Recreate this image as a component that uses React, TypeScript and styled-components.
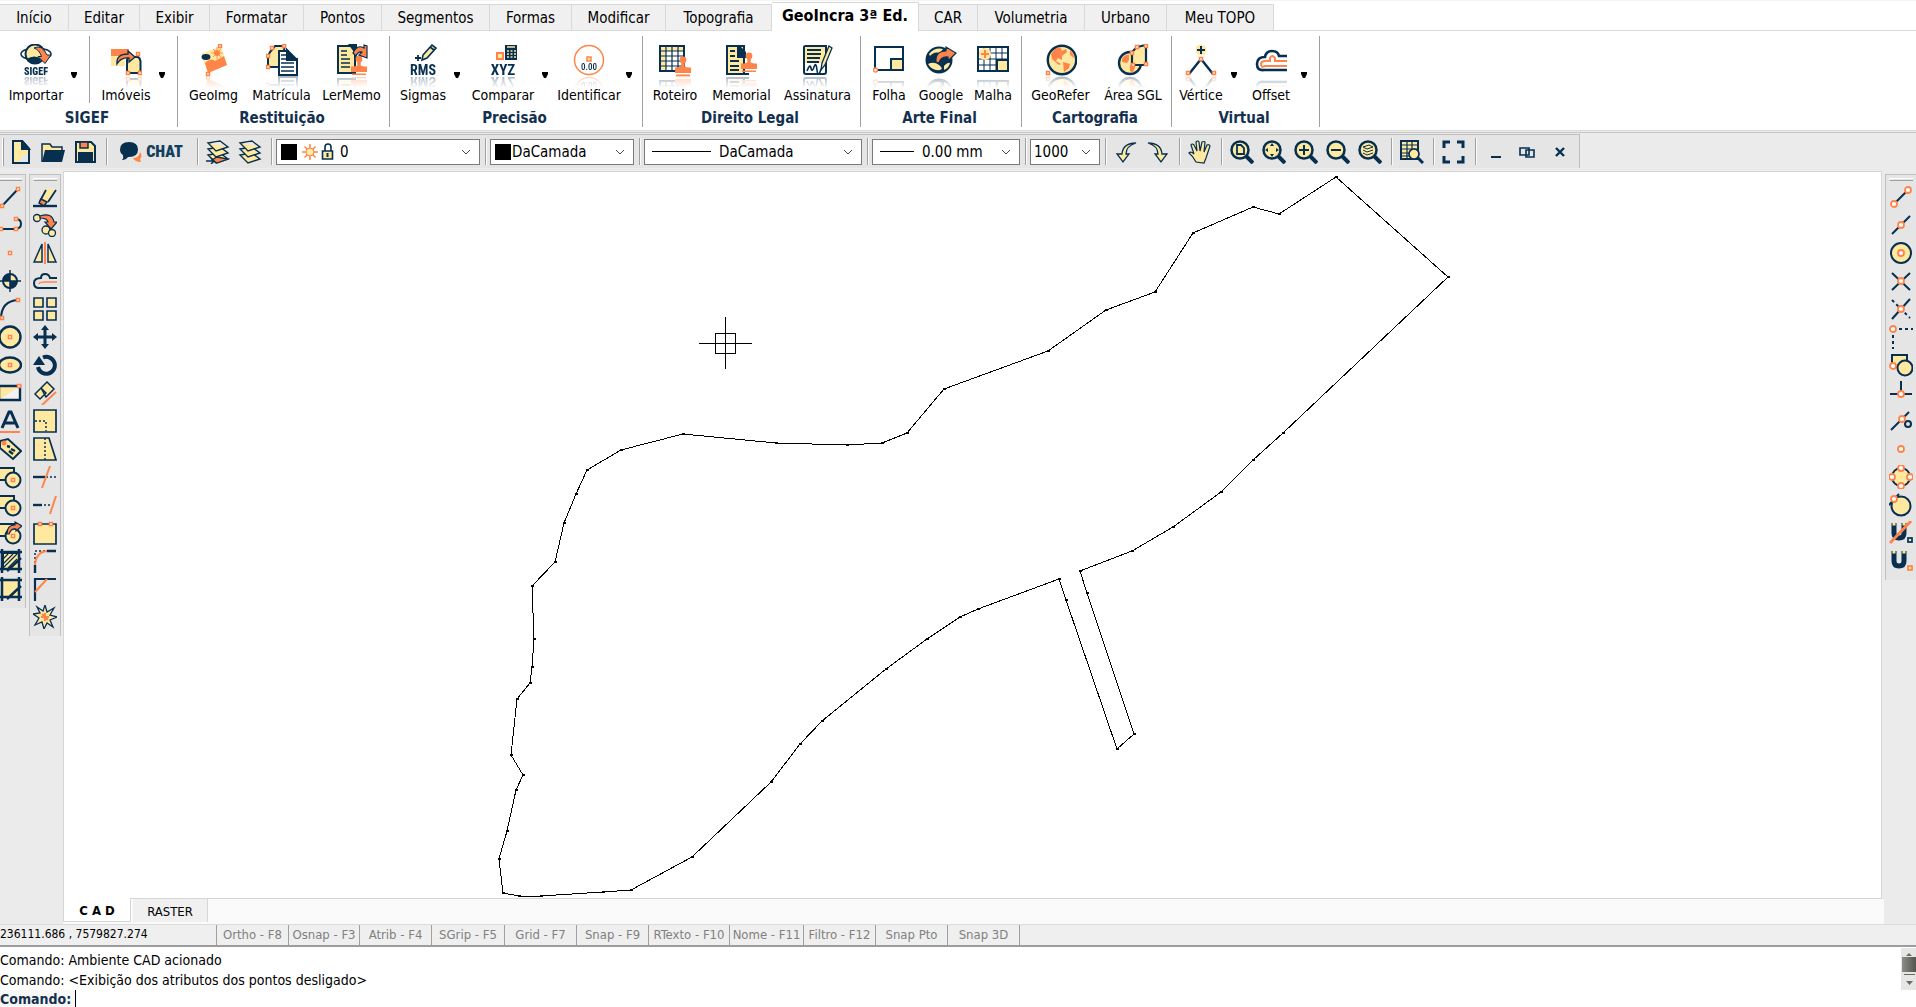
import React from "react";
import styled, { createGlobalStyle, css } from "styled-components";

const N = "#062f50";
const Y = "#ffe8a0";
const O = "#ff8449";
const sans = `"DejaVu Sans Condensed", "DejaVu Sans", "Noto Sans", sans-serif`;

const GlobalStyle = createGlobalStyle`
  *, *::before, *::after { box-sizing: border-box; }
  body { margin: 0; background: #ebebeb; font-family: ${sans}; font-stretch: condensed; color: #000; }
  button, input, select { font: inherit; font-stretch: inherit; color: inherit; }
  button { border: 0; padding: 0; background: none; cursor: default; }
  svg { display: block; flex: none; }
`;

const Page = styled.div`
  display: flex;
  flex-direction: column;
  height: 100vh;
  overflow: hidden;
`;

/* ---------- menu tabs ---------- */

const MenuTabs = styled.nav`
  display: flex;
  align-items: flex-end;
  height: 31px;
  background: #fff;
  border-top: 1px solid #f4f4f4;
  border-bottom: 1px solid #d9d9d9;
`;

const MenuTab = styled.button<{ $w: number; $active?: boolean }>`
  width: ${(p) => p.$w}px;
  height: 26px;
  flex: none;
  background: #f0f0f0;
  border-top: 1px solid #d9d9d9;
  border-right: 1px solid #d9d9d9;
  font-size: 15px;
  line-height: 24px;
  white-space: nowrap;
  ${(p) =>
    p.$active &&
    css`
      height: 29px;
      margin-bottom: -1px;
      padding-bottom: 3px;
      background: #fff;
      font-size: 16px;
      font-weight: bold;
    `}
`;

/* ---------- ribbon ---------- */

const Ribbon = styled.section`
  display: flex;
  flex: none;
  padding: 5px 0 3px;
  background: #fff;
  border-bottom: 1px solid #d9d9d9;
`;

const Group = styled.div<{ $w: number }>`
  display: flex;
  flex-direction: column;
  width: ${(p) => p.$w}px;
  border-right: 1px solid #a0a0a0;
`;

const GroupItems = styled.div<{ $pad: number }>`
  display: flex;
  gap: 4px;
  height: 67px;
  padding-left: ${(p) => p.$pad}px;
`;

const GroupTitle = styled.div`
  padding: 6px 3px 0 0;
  height: 24px;
  text-align: center;
  font-size: 15px;
  line-height: 18px;
  font-weight: bold;
  color: #14304f;
`;

const Command = styled.div`
  display: flex;
`;

const BigButton = styled.button<{ $w: number }>`
  display: flex;
  flex-direction: column;
  align-items: center;
  justify-content: space-between;
  width: ${(p) => p.$w}px;
  height: 68px;
  padding-top: 8px;
  svg {
    -webkit-box-reflect: below 0 linear-gradient(transparent 62%, rgba(0, 0, 0, 0.35));
  }
`;

const BigLabel = styled.span`
  position: relative;
  z-index: 1;
  font-size: 14px;
  line-height: 17px;
  white-space: nowrap;
`;

const ArrowButton = styled.button`
  display: flex;
  align-items: center;
  justify-content: center;
  width: 16px;
  padding-top: 11px;
`;

const ItemRule = styled.div`
  width: 8px;
  background: linear-gradient(#a0a0a0, #a0a0a0) 3px 0 / 1px 100% no-repeat;
`;

/* ---------- quick toolbar ---------- */

const ToolbarRow = styled.section`
  flex: none;
  display: flex;
  margin-top: 1px;
  padding: 1px 0 3px;
  border-top: 1px solid #c6c6c6;
  background: #ebebeb;
`;

const Toolbar = styled.div`
  display: flex;
  align-items: center;
  height: 34px;
  padding: 0 3px 0 2px;
  background: #e5e5e5;
  border-top: 1px solid #bdbdbd;
  border-right: 1px solid #bdbdbd;
`;

const Grip = styled.div`
  width: 2px;
  height: 28px;
  margin-right: 1px;
  border-left: 1px solid #fff;
  border-right: 1px solid #a0a0a0;
`;

const Rule = styled.div`
  width: 2px;
  height: 27px;
  margin: 0 3px 0 5px;
  border-left: 1px solid #a0a0a0;
  border-right: 1px solid #fafafa;
`;

const ToolButton = styled.button`
  display: flex;
  align-items: center;
  justify-content: center;
  width: 32px;
  height: 28px;
`;

const ChatButton = styled.button`
  display: flex;
  align-items: center;
  justify-content: center;
  gap: 4px;
  width: 81px;
  height: 28px;
  font-family: Roboto, sans-serif;
  font-size: 16px;
  font-weight: 900;
  color: #10405c;
`;

const ComboBox = styled.label<{ $w: number; $pad: number }>`
  display: flex;
  align-items: center;
  width: ${(p) => p.$w}px;
  height: 26px;
  padding: 0 8px 0 ${(p) => p.$pad}px;
  background: #fff;
  border: 1px solid #7a7a7a;
`;

const ComboSelect = styled.select`
  flex: 1;
  min-width: 0;
  height: 22px;
  padding: 0;
  border: 0;
  outline: 0;
  background: transparent;
  appearance: none;
  font-size: 15px;
`;

const Swatch = styled.span`
  flex: none;
  width: 16px;
  height: 16px;
  margin-right: 1px;
  background: #000;
`;

const Stroke = styled.span<{ $w: number; $gap: number }>`
  flex: none;
  width: ${(p) => p.$w}px;
  height: 1px;
  margin-right: ${(p) => p.$gap}px;
  background: #000;
`;

/* ---------- workspace ---------- */

const Workspace = styled.main`
  display: flex;
  flex: 1;
  min-height: 0;
`;

const Rail = styled.aside`
  display: flex;
  align-items: flex-start;
  gap: 3px;
  padding: 3px 2px 0 0;
  flex: none;
`;

const RightRail = styled(Rail)`
  padding: 3px 0 0 3px;
`;

const ToolColumn = styled.div<{ $w: number; $end?: boolean; $leftLine?: boolean }>`
  display: flex;
  flex-direction: column;
  align-items: ${(p) => (p.$end ? "flex-end" : "center")};
  gap: 4px;
  width: ${(p) => p.$w}px;
  padding: 3px ${(p) => (p.$end ? 3 : 0)}px 7px 0;
  overflow: hidden;
  background: #e5e5e5;
  border-top: 1px solid #c0c0c0;
  border-right: ${(p) => (p.$leftLine ? 0 : 1)}px solid #c0c0c0;
  border-left: ${(p) => (p.$end ? 0 : 1)}px solid #c0c0c0;
`;

const ColumnGrip = styled.div`
  width: 24px;
  height: 3px;
  border-top: 1px solid #fff;
  border-left: 1px solid #fff;
  border-bottom: 1px solid #a0a0a0;
`;

const SideButton = styled.button`
  width: 24px;
  height: 24px;
  flex: none;
`;

const Document = styled.section`
  display: flex;
  flex: 1;
  flex-direction: column;
  min-width: 0;
`;

const Canvas = styled.div`
  flex: 1;
  min-height: 0;
  overflow: hidden;
  background: #fff;
  border: 1px solid #d6d6d6;
`;

const SheetTabs = styled.div`
  display: flex;
  height: 25px;
  gap: 2px;
  margin-right: -2px;
  background: #fafafa;
`;

const SheetTab = styled.button<{ $w: number; $active?: boolean }>`
  width: ${(p) => p.$w}px;
  height: 23px;
  padding-top: 2px;
  background: #f0f0f0;
  border-right: 1px solid #d6d6d6;
  font-size: 13px;
  line-height: 20px;
  ${(p) =>
    p.$active &&
    css`
      margin-top: -1px;
      height: 24px;
      background: #fff;
      border-left: 1px solid #d6d6d6;
      border-bottom: 1px solid #d6d6d6;
      font-weight: bold;
    `}
`;

/* ---------- status and command line ---------- */

const StatusBar = styled.footer`
  display: flex;
  flex: none;
  height: 23px;
  background: #efefef;
  border-top: 1px solid #dcdcdc;
  border-bottom: 2px solid #9d9d9d;
  font-size: 12px;
  line-height: 19px;
`;

const Coordinates = styled.output`
  width: 217px;
  font-size: 12px;
  border-right: 1px solid #a0a0a0;
`;

const StatusToggle = styled.button<{ $w: number }>`
  width: ${(p) => p.$w}px;
  padding-bottom: 2px;
  border-right: 1px solid #a0a0a0;
  color: #808080;
  font-size: 13px;
  white-space: nowrap;
`;

const CommandPane = styled.section`
  display: flex;
  flex: none;
  align-items: flex-start;
  justify-content: space-between;
  height: 60px;
  padding-top: 1px;
  background: #fff;
`;

const Log = styled.div`
  flex: 1;
  padding-top: 2px;
  font-size: 14px;
  line-height: 20px;
`;

const LogLine = styled.div`
  white-space: nowrap;
`;

const Prompt = styled.div`
  display: flex;
  height: 17px;
  label {
    padding-right: 4px;
    font-weight: bold;
    line-height: 19px;
    color: #14304f;
    background: #f7f7f7;
  }
  input {
    flex: 1;
    height: 17px;
    padding: 0;
    border: 0;
    border-left: 1px solid #000;
    outline: 0;
  }
`;

const ScrollBar = styled.div`
  display: flex;
  flex-direction: column;
  align-items: center;
  gap: 1px;
  width: 15px;
  height: 42px;
  background: #e6e6e4;
`;

const ScrollThumb = styled.div`
  width: 14px;
  height: 16px;
  align-self: flex-end;
  background: linear-gradient(90deg, #8c8c88, #55554f);
  border-bottom: 1px solid #e6e6e4;
`;

/* ---------- drawings ---------- */

type Art = React.ReactNode;

const Icon = ({ size = 24, children }: { size?: number; children: Art }) => (
  <svg width={size} height={size} viewBox={`0 0 ${size} ${size}`} fill="none" stroke={N} strokeWidth="2" aria-hidden="true">
    {children}
  </svg>
);

const Handle = ({ x, y }: { x: number; y: number }) => (
  <rect x={x - 1.5} y={y - 1.5} width="3" height="3" fill="#fff" stroke={O} strokeWidth="1.5" />
);

const Knob = ({ x, y }: { x: number; y: number }) => <circle cx={x} cy={y} r="3" fill="#fff" stroke={O} strokeWidth="1.8" />;

const Stamp = ({ x, y }: { x: number; y: number }) => (
  <g transform={`translate(${x} ${y})`} fill={O} stroke="none">
    <circle cx="8" cy="4" r="3.4" />
    <path d="M6.3 6h3.4v5.5h-3.4zM3 11.5q5-2 10 0h3V17H0v-5.500z" />
    <path d="M1 18.500h14v1.500H1z" />
  </g>
);

const bigIcons: Record<string, Art> = {
  sigef: (
    <>
      <ellipse cx="16" cy="10" rx="15" ry="6" strokeWidth="1.500" />
      <circle cx="15" cy="10" r="9.500" fill={Y} strokeWidth="2" />
      <path d="M6.500 15q8-5 15 0-3 5-8 4.500-5-.5-7-4.500z" fill={N} stroke="none" />
      <path d="M14 4q8-4 13 7h4l-6 8.500-7-7h3.500Q19.500 6 14 4z" fill={O} strokeWidth="1" />
      <text x="16" y="31" textAnchor="middle" fontFamily="Roboto, sans-serif" fontWeight="900" fontSize="10" fill={N} stroke="none">SIGEF</text>
    </>
  ),
  imoveis: (
    <>
      <path d="M1 5h18v7H1z" fill={O} stroke="none" />
      <path d="M1 12h14v10H1z" fill={Y} stroke="none" />
      <path d="M18 13h10q2 1 2.500 4v12H17V16z" fill={Y} />
      <path d="M7 20q-1-10 11-10V7l7 6-6 5v-4q-8-1-12 6z" fill={O} strokeWidth="1.300" />
      <Handle x={18} y={29} /><Handle x={30} y={29} /><Handle x={28} y={10} />
    </>
  ),
  geoimg: (
    <>
      <path d="M3 10L23 2l6 19-19 8z" fill={Y} stroke="none" />
      <path d="M7 19q6-6 10-2 5-3 9-5l3 9-19 8z" fill={O} stroke="none" />
      <ellipse cx="8" cy="13" rx="4.500" ry="3" fill={N} stroke="none" />
      <circle cx="19" cy="9" r="3" fill={O} stroke="none" />
      <path d="M19 3v12M13 9h12M15 5l8 8M23 5l-8 8" stroke={O} strokeWidth=".8" />
      <Handle x={22} y={2} /><Handle x={10} y={30} />
    </>
  ),
  matricula: (
    <>
      <path d="M4 8l5-6h10l-1 4v17H2V12z" fill={Y} />
      <Handle x={6} y={4} /><Handle x={18} y={2} /><Handle x={2} y={12} /><Handle x={2} y={23} />
      <path d="M13 7h9v8h9v16H13z" fill="#fff" />
      <path d="M21 6l10 10H21z" fill={N} />
      <path d="M15 11h5M15 15h5M15 19h13M15 23h13M15 27h13" strokeWidth="1.500" />
    </>
  ),
  lermemo: (
    <>
      <path d="M2 2h17v27H2z" fill={Y} />
      <path d="M14 1h6v8z" fill={N} />
      <path d="M5 7h6M5 11h6M5 15h9M5 19h9M5 23h9" strokeWidth="1.600" />
      <Stamp x={15} y={11} />
      <path d="M17 9q4-9 11-5V1l3 1v12l-8-3 3-3q-4-1-6 4z" fill={O} strokeWidth="1.200" />
    </>
  ),
  rms: (
    <>
      <path d="M16 11L25 1l4 3-9 10-5 2z" fill={Y} strokeWidth="1.600" />
      <path d="M23 3l4 3" strokeWidth="1.600" />
      <path d="M11 11v6M8 14h6" strokeWidth="1.800" />
      <text x="16" y="31" textAnchor="middle" fontFamily="Roboto, sans-serif" fontWeight="700" fontSize="14" fill={N} stroke="none">RMS</text>
    </>
  ),
  xyz: (
    <>
      <path d="M18 1h12v15H18z" fill={N} stroke="none" />
      <path d="M20 3h8M20 7h2M23.500 7h2M27 7h2M20 10h2M23.500 10h2M27 10h2M20 13h2M23.500 13h2M27 13h2" stroke={Y} strokeWidth="1.700" />
      <rect x="10" y="9" width="6" height="6" fill={Y} stroke={O} strokeWidth="2" />
      <text x="16" y="31" textAnchor="middle" fontFamily="Roboto, sans-serif" fontWeight="700" fontSize="15" fill={N} stroke="none">XYZ</text>
    </>
  ),
  identificar: (
    <>
      <circle cx="16" cy="16" r="14.500" stroke={O} strokeWidth="1.500" />
      <rect x="14" y="13" width="4" height="4" fill={Y} stroke={O} strokeWidth="1.500" />
      <text x="16" y="26" textAnchor="middle" fontFamily="Roboto, sans-serif" fontWeight="500" fontSize="9" fill={N} stroke="none">0.00</text>
    </>
  ),
  roteiro: (
    <>
      <path d="M1 2h24v25H1z" fill="#fff" />
      <path d="M1 2h24v5H1zM1 7h6v20H1z" fill={Y} stroke="none" />
      <path d="M1 2h24v25H1z" />
      <path d="M7 2v25M13 2v25M19 2v25M1 7h24M1 12h24M1 17h24M1 22h24" strokeWidth="1.200" />
      <Stamp x={16} y={12} />
    </>
  ),
  memorial: (
    <>
      <path d="M1 2h17v28H1z" fill={Y} />
      <path d="M11 1h2l7 7v6h-9z" fill={N} stroke="none" />
      <path d="M4 7h5M4 12h5M4 17h9M4 22h9M4 26h9" strokeWidth="2" />
      <path d="M1 30h22" />
      <Stamp x={15} y={8} />
    </>
  ),
  assinatura: (
    <>
      <path d="M2 3q0-1 2-1h20v26q0 2-2 2H4q-2 0-2-2z" fill="#fff" />
      <path d="M3 3h20v16H3z" fill={Y} stroke="none" />
      <path d="M5 6h14M5 10h14M5 14h13M5 18h12" strokeWidth="2" />
      <path d="M5 27q3-8 4-3t3-1 3 3 4-1" strokeWidth="1.600" />
      <path d="M27 2l3 2-7 17-4 5 1-7z" fill={Y} strokeWidth="1.300" />
    </>
  ),
  folha: (
    <>
      <path d="M2 3h28v23H2z" />
      <path d="M18 15h12v11H18z" fill={Y} />
      <circle cx="2.500" cy="26" r="2" fill="#fff" stroke={O} strokeWidth="1.400" />
    </>
  ),
  google: (
    <>
      <circle cx="14" cy="16" r="12.500" fill={N} />
      <path d="M4 10q6-7 14-5l-3 4q-6-2-10 3zM3 20q6-3 11 1t1 5q-8 1-12-6zM19 22q4-4 6-3-1 5-6 7z" fill={Y} stroke="none" />
      <path d="M11 18q-1-11 10-11V3l10 6-8 8v-4q-7-1-9 6z" fill={O} strokeWidth="1.200" />
    </>
  ),
  malha: (
    <>
      <path d="M1 3h30v24H1z" fill="#fff" />
      <path d="M7 3v24M13 3v24M19 3v24M25 3v24M1 9h30M1 15h30M1 21h30" strokeWidth="1" />
      <circle cx="8" cy="10" r="6" fill={Y} stroke="none" />
      <path d="M8 6v8M4 10h8" stroke={O} />
      <path d="M20 16h11v11H20z" fill={Y} />
    </>
  ),
  georefer: (
    <>
      <circle cx="17" cy="16" r="14.200" fill={Y} strokeWidth="2.400" />
      <path d="M6 10q3-6 9-7l2 4 4-2 1 3-5 4v4l-4-2-2 3 5 3-2 1-7-6zM18 18l7 2-1 4-5 4zM25 6q4 4 4 8l-4-3z" fill={O} stroke="none" />
      <Handle x={3} y={29} />
    </>
  ),
  areasgl: (
    <>
      <circle cx="13" cy="19" r="11" fill={Y} strokeWidth="2.400" />
      <path d="M5 15q3-5 7-4v5l-2 3-5-1zM13 21l5 2-2 6-3-2z" fill={O} stroke="none" />
      <path d="M20 3l9-2v20H15V8z" fill={Y} strokeWidth="2.200" />
      <Handle x={20} y={3} /><Handle x={29} y={2} /><Handle x={15} y={9} /><Handle x={16} y={21} /><Handle x={29} y={20} />
    </>
  ),
  vertice: (
    <>
      <circle cx="16" cy="6" r="5.500" fill={Y} stroke="none" />
      <path d="M16 2v8M12 6h8" />
      <path d="M16 15L4 30M16 15l12 15" strokeWidth="2.400" />
      <Handle x={16} y={15} /><Handle x={3} y={29} /><Handle x={29} y={29} />
    </>
  ),
  offset: (
    <>
      <path d="M32 12h-8q-1-5-7-5t-7 6q-8 0-8 7t7 6h23" strokeWidth="2.600" />
      <path d="M32 17H20v-3q-3-4-5 0v3q-9-1-9 3t4 2h22" stroke={O} />
    </>
  ),
};

const Lens = ({ children }: { children?: Art }) => (
  <>
    <path d="M16 16l7 7" strokeWidth="4" />
    <circle cx="10" cy="10" r="8.500" fill={Y} strokeWidth="2.500" />
    {children}
  </>
);

const Shapes = ({ children }: { children?: Art }) => (
  <>
    <path d="M1 3h15v12H1z" fill={Y} />
    <circle cx="15" cy="15" r="7.500" fill={Y} />
    {children}
  </>
);

const Magnet = () => (
  <>
    <path d="M5 2v10q0 5 5 5t5-5V2" strokeWidth="5" />
    <path d="M3.500 3h3M13.500 3h3" stroke={Y} strokeWidth="3" />
  </>
);

const Sheets = () => (
  <g fill={Y} strokeWidth="1.400">
    <path d="M2 15l12-2 8 6-12 4z" />
    <path d="M2 9l12-2 8 6-12 4z" />
    <path d="M2 3l12-2 8 6-12 4z" />
    <path d="M6 3l8-1 6 5z" fill="#e3e8ec" stroke="none" />
  </g>
);

const art: Record<string, Art> = {
  file: (
    <>
      <path d="M4 1h9l7 8v14H4z" fill={Y} />
      <path d="M20 12v11H7z" fill="#dfe8f0" stroke="none" />
      <path d="M13 1l7 8h-7z" fill={N} /><path d="M4 1h9l7 8v14H4z" />
    </>
  ),
  folder: (
    <>
      <path d="M1 22V4h8l2 3h10v4" fill={Y} strokeWidth="1.500" />
      <path d="M4 10h20l-3 12H1z" fill={N} stroke="none" />
    </>
  ),
  save: (
    <>
      <path d="M3 2h15l4 4v16H3z" fill={Y} />
      <path d="M7 2h8v6H7z" fill={O} strokeWidth="1.500" /><path d="M6 13h13v9H6z" fill={N} />
    </>
  ),
  layersSet: (
    <>
      <Sheets />
      <path d="M6 20l5-3 11 2-11 4z" fill={O} strokeWidth="1.300" /><path d="M0 21h7M5 18l3 3-3 3" strokeWidth="1.500" />
    </>
  ),
  layers: <Sheets />,
  undo: <path d="M22 3Q9 3 8 14H3l6 8 6-8h-3q0-8 10-11z" fill={Y} strokeWidth="1.300" />,
  redo: <path d="M2 3q13 0 14 11h5l-6 8-6-8h3Q12 6 2 3z" fill={Y} strokeWidth="1.300" />,
  hand: <path d="M8 22q-3-6-7-9 2-2 5 1L3 5q1-2 3 0l3 6-1-9q2-2 3 0l1 9 2-9q2-1 3 0l-1 10 3-7q2-1 3 1l-4 12-2 5z" fill={Y} strokeWidth="1.200" />,
  zoomPage: <Lens><path d="M7 5h4l3 3v6H7z" fill={Y} strokeWidth="1.800" /></Lens>,
  zoomPan: <Lens><path d="M10 3l2 3H8zM10 17l2-3H8zM3 10l3-2v4zM17 10l-3-2v4z" fill={N} stroke="none" /></Lens>,
  zoomIn: <Lens><path d="M10 5v10M5 10h10" /></Lens>,
  zoomOut: <Lens><path d="M5 10h10" /></Lens>,
  zoomLayers: <Lens><path d="M5 7l6-2 4 2-6 2zM5 10l4 2 6-2M5 13l4 2 6-2" strokeWidth="1" /></Lens>,
  tableSearch: (
    <>
      <path d="M1 1h17v18H1z" fill={Y} />
      <path d="M1 5h17M1 9h17M1 13h17M1 16h17M7 1v18M12 1v18" strokeWidth="1.200" />
      <path d="M18 18l5 5" strokeWidth="3" /><circle cx="14" cy="14" r="5" fill={Y} strokeWidth="1.700" />
    </>
  ),
  full: <path d="M2 8V2h6M15 2h6v6M21 16v6h-6M8 22H2v-6" strokeWidth="3" />,
  minimize: <path d="M7 17h10" />,
  restore: <path d="M4 8h9v7H4zM10 10h8v7h-8z" strokeWidth="1.600" />,
  close: <path d="M8 8l8 8M16 8l-8 8" strokeWidth="2.400" />,

  line: <><path d="M4 21L20 4" /><Handle x={4} y={21} /><Handle x={20} y={4} /></>,
  polyline: <><path d="M3 16h13q7 0 7-5t-5-5" /><Handle x={3} y={16} /><Handle x={18} y={6} /><Handle x={18} y={16} /></>,
  point: <Handle x={12} y={12} />,
  target: (
    <>
      <circle cx="12" cy="12" r="7" fill={Y} />
      <path d="M12 5v7H5a7 7 0 0 1 7-7zM12 19v-7h7a7 7 0 0 1-7 7z" fill={N} stroke="none" /><path d="M12 1v22M1 12h22" strokeWidth="1.500" />
    </>
  ),
  arc: <><path d="M3 22Q3 4 20 3" /><Handle x={4} y={21} /><Handle x={20} y={3} /></>,
  circle: <><circle cx="12" cy="12" r="10.500" fill={Y} strokeWidth="2.400" /><Handle x={12} y={12} /></>,
  ellipse: <><ellipse cx="12" cy="12" rx="11" ry="7.500" fill={Y} strokeWidth="2.400" /><Handle x={12} y={12} /></>,
  rect: <><path d="M1 5h21v14H1z" fill="#f3f3f3" stroke="none" /><path d="M1 19V5h21z" fill={Y} stroke="none" /><path d="M1 5h21v14H1z" strokeWidth="2.400" /><Handle x={21} y={5} /></>,
  letter: <><path d="M4 19L11 3h2l7 16M7 14h10" strokeWidth="3" /><path d="M2 23h20" stroke={O} /></>,
  tag: <><path d="M2 4l8-2 13 12-8 8L2 11z" fill={Y} /><path d="M9 9l3 1M13 12l4 2M11 14l4 3" strokeWidth="2.400" /><circle cx="6" cy="6" r="2.500" fill={O} stroke="none" /></>,
  shapes: <Shapes><Handle x={15} y={15} /></Shapes>,
  shapesEdit: <Shapes><Handle x={15} y={15} /><path d="M9 13q0-9 8-9V1l7 4-6 5V8q-5-1-7 5z" fill={O} strokeWidth="1.200" /></Shapes>,
  hatch: <><path d="M5 4h16v16H5z" fill={Y} /><path d="M5 10l5-5M5 15L15 5M5 19L19 5M10 19l9-9" strokeWidth="1.200" /><path d="M4 0v24M21 0v24M0 3h24M0 20h24M9 22L23 9" strokeWidth="2.500" /></>,
  region: <><path d="M4 3h17v17H4z" fill={Y} /><path d="M4 0v24M21 0v24M0 3h24M0 20h24M9 22L23 9" strokeWidth="2.500" /></>,

  eraser: <><path d="M0 21h24" strokeWidth="2.400" /><path d="M13 4h9l-8 14H6z" fill={Y} stroke="none" /><path d="M13 5L7 16M23 5l-8 12" strokeWidth="1.800" /><path d="M8 14l6 3-3 4-5-3z" fill={O} strokeWidth="1.500" /></>,
  copy: <><circle cx="4" cy="5" r="3.500" fill={Y} strokeWidth="1.300" /><circle cx="13" cy="17" r="4" fill={Y} strokeWidth="1.300" /><circle cx="19" cy="20" r="3.500" fill={Y} strokeWidth="1.300" /><path d="M7 3q12-4 14 6h3l-6 7-6-7h3q-1-4-8-4z" fill={O} strokeWidth="1.200" /></>,
  mirror: <><path d="M9 3v18H1zM15 3v18h8z" fill={Y} strokeWidth="1.500" /><path d="M12 1v22" stroke={O} /></>,
  offsetSmall: <><path d="M24 9h-7q-1-4-5-4T8 9q-7 0-7 5t5 5h18" /><path d="M24 13H12q-6 0-6 2" stroke={O} strokeWidth="1.300" /></>,
  array: <path d="M1 1h9v9H1zM14 1h9v9h-9zM1 14h9v9H1zM14 14h9v9h-9z" fill={Y} strokeWidth="1.600" />,
  move: <><path d="M12 3v18M3 12h18" strokeWidth="3" /><path d="M12 0l4 5H8zM12 24l4-5H8zM0 12l5-4v8zM24 12l-5-4v8z" fill={N} stroke="none" /></>,
  rotate: <><path d="M10 4.500A8.500 8.500 0 1 1 5 14" strokeWidth="4" /><path d="M0 12l6-9 6 9z" fill={N} stroke="none" /></>,
  align: <><path d="M2 13l6-6 5 5-6 6zM8 7l6-6 7 7-8 8z" fill={Y} strokeWidth="1.500" /><path d="M9 24L23 11" stroke={O} /></>,
  scale: <><path d="M1 1h22v22H1z" fill={Y} strokeWidth="1.700" /><path d="M2 12h11v10" strokeDasharray="2 2" strokeWidth="1.500" /></>,
  stretch: <><path d="M1 1h15l7 22H1z" fill={Y} strokeWidth="1.700" /><path d="M12 1v22" strokeDasharray="2 2" strokeWidth="1.500" /></>,
  trim: <><path d="M0 12h12" strokeWidth="2.400" /><path d="M13 12h11" strokeDasharray="2 2" strokeWidth="1.500" /><path d="M17 1L9 23" stroke={O} /></>,
  extend: <><path d="M0 12h9" strokeWidth="2.400" /><path d="M11 12h8" strokeDasharray="2 2" strokeWidth="1.500" /><path d="M23 3l-6 18" stroke={O} /></>,
  breakAt: <><path d="M1 3h22v20H1z" fill={Y} strokeWidth="1.700" /><Handle x={7} y={3} /><Handle x={18} y={3} /></>,
  fillet: <><path d="M2 14V2h10" strokeDasharray="2 2" strokeWidth="1.500" /><path d="M2 24v-8M14 2h9" strokeWidth="2.400" /><path d="M2 16Q3 3 14 2" stroke={O} /></>,
  chamfer: <><path d="M2 24V2h21" strokeWidth="2.200" /><path d="M2 15L14 2" stroke={O} /></>,
  explode: <><path d="M12 0l2 7 7-4-4 7 7 2-7 3 3 7-6-4-3 6-2-7-7 3 4-7-6-4 7-1-3-6 6 4z" fill={Y} strokeWidth="1.300" /><path d="M12 8v8M8 12h8M9 9l6 6" stroke={O} /></>,

  snapEnd: <><path d="M5 19L19 5" /><Knob x={5} y={19} /><Knob x={19} y={5} /></>,
  snapMid: <><path d="M3 21L21 3" /><Knob x={12} y={12} /></>,
  snapCenter: <><circle cx="12" cy="12" r="10" fill={Y} /><Knob x={12} y={12} /></>,
  snapCross: <><path d="M3 4l18 17M21 4L3 21" /><Knob x={12} y={12} /></>,
  snapApparent: <><path d="M21 2L3 22" /><path d="M3 3l18 18" strokeDasharray="3 3" /><Knob x={12} y={12} /></>,
  snapOrtho: <><path d="M4 4h20M4 4v20" strokeDasharray="3 3" /><Knob x={4} y={4} /></>,
  snapInsert: <><path d="M3 2h15v12H3z" fill={Y} /><circle cx="16" cy="15" r="7.500" fill={Y} /><Knob x={4} y={13} /></>,
  snapPerp: <><path d="M12 0v12M1 13h22" /><Knob x={12} y={13} /></>,
  snapTangent: <><path d="M2 21L20 3" /><circle cx="19" cy="15" r="3" /><Knob x={13} y={10} /></>,
  snapNode: <Knob x={12} y={12} />,
  snapQuad: <><circle cx="12" cy="12" r="9" fill={Y} /><Knob x={12} y={3} /><Knob x={12} y={21} /><Knob x={3} y={12} /><Knob x={21} y={12} /></>,
  snapNear: <><circle cx="12" cy="13" r="9.500" fill={Y} /><path d="M0 12L10 1" /><Knob x={5} y={6} /></>,
  snapOff: <><Magnet /><rect x="19" y="17" width="4" height="4" strokeWidth="1.700" /><path d="M1 22L22 0" stroke={O} strokeWidth="3" /></>,
  snapOn: <><Magnet /><rect x="19" y="17" width="4" height="4" fill={Y} stroke={O} strokeWidth="1.700" /></>,
};

/* ---------- data ---------- */

const menus: [string, number][] = [
  ["Início", 69], ["Editar", 71], ["Exibir", 70], ["Formatar", 94], ["Pontos", 78],
  ["Segmentos", 108], ["Formas", 82], ["Modificar", 94], ["Topografia", 106],
  ["GeoIncra 3ª Ed.", 147], ["CAR", 59], ["Volumetria", 107], ["Urbano", 82], ["Meu TOPO", 107],
];

type Item = { icon: string; label: string; w: number; menu?: boolean; rule?: boolean };

const groups: { title: string; w: number; pad: number; items: Item[] }[] = [
  { title: "SIGEF", w: 178, pad: 6, items: [
    { icon: "sigef", label: "Importar", w: 60, menu: true, rule: true },
    { icon: "imoveis", label: "Imóveis", w: 56, menu: true },
  ] },
  { title: "Restituição", w: 212, pad: 4, items: [
    { icon: "geoimg", label: "GeoImg", w: 63 },
    { icon: "matricula", label: "Matrícula", w: 65 },
    { icon: "lermemo", label: "LerMemo", w: 67 },
  ] },
  { title: "Precisão", w: 253, pad: 7, items: [
    { icon: "rms", label: "Sigmas", w: 52, menu: true },
    { icon: "xyz", label: "Comparar", w: 68, menu: true },
    { icon: "identificar", label: "Identificar", w: 64, menu: true },
  ] },
  { title: "Direito Legal", w: 218, pad: 4, items: [
    { icon: "roteiro", label: "Roteiro", w: 56 },
    { icon: "memorial", label: "Memorial", w: 69 },
    { icon: "assinatura", label: "Assinatura", w: 75 },
  ] },
  { title: "Arte Final", w: 161, pad: 4, items: [
    { icon: "folha", label: "Folha", w: 48 },
    { icon: "google", label: "Google", w: 48 },
    { icon: "malha", label: "Malha", w: 48 },
  ] },
  { title: "Cartografia", w: 150, pad: 4, items: [
    { icon: "georefer", label: "GeoRefer", w: 69 },
    { icon: "areasgl", label: "Área SGL", w: 68 },
  ] },
  { title: "Virtual", w: 148, pad: 4, items: [
    { icon: "vertice", label: "Vértice", w: 50, menu: true },
    { icon: "offset", label: "Offset", w: 50, menu: true },
  ] },
];

const drawTools = ["line", "polyline", "point", "target", "arc", "circle", "ellipse", "rect", "letter", "tag", "shapes", "shapes", "shapesEdit", "hatch", "region"];
const editTools = ["eraser", "copy", "mirror", "offsetSmall", "array", "move", "rotate", "align", "scale", "stretch", "trim", "extend", "breakAt", "fillet", "chamfer", "explode"];
const snapTools = ["snapEnd", "snapMid", "snapCenter", "snapCross", "snapApparent", "snapOrtho", "snapInsert", "snapPerp", "snapTangent", "snapNode", "snapQuad", "snapNear", "snapOff", "snapOn"];

const toggles: [string, number][] = [
  ["Ortho - F8", 72], ["Osnap - F3", 71], ["Atrib - F4", 72], ["SGrip - F5", 73], ["Grid - F7", 72],
  ["Snap - F9", 72], ["RTexto - F10", 81], ["Nome - F11", 74], ["Filtro - F12", 72], ["Snap Pto", 72], ["Snap 3D", 72],
];

const boundary: [number, number][] = [
  [1059, 579], [978, 609], [960, 617], [927, 639], [886, 669], [822, 721], [800, 744], [771, 782],
  [692, 857], [631, 890], [603, 892], [541, 896], [519, 896], [503, 893], [499, 859], [507, 831],
  [516, 790], [523, 775], [511, 755], [517, 699], [530, 683], [532, 667], [534, 639], [532, 586],
  [555, 562], [564, 523], [576, 494], [587, 470], [621, 450], [683, 434], [776, 443], [847, 445],
  [882, 443], [907, 433], [944, 389], [1048, 351], [1106, 310], [1155, 292], [1193, 233], [1253, 207],
  [1279, 214], [1336, 177], [1448, 277], [1283, 433], [1253, 460], [1221, 492], [1173, 527],
  [1132, 551], [1080, 571], [1087, 593], [1134, 734], [1117, 749], [1066, 600],
];

const Chevron = () => (
  <svg width="10" height="6" viewBox="0 0 10 6" fill="none" stroke="#444" strokeWidth="1" aria-hidden="true">
    <path d="M1 1l4 4 4-4" />
  </svg>
);

const Combo = ({ w, pad, label, value, children }: { w: number; pad: number; label: string; value: string; children?: Art }) => (
  <ComboBox $w={w} $pad={pad}>
    {children}
    <ComboSelect aria-label={label} defaultValue={value}>
      <option>{value}</option>
    </ComboSelect>
    <Chevron />
  </ComboBox>
);

const Tools = ({ names }: { names: string[] }) => (
  <>
    {names.map((name) => (
      <ToolButton key={name} aria-label={name}>
        <Icon>{art[name]}</Icon>
      </ToolButton>
    ))}
  </>
);

const SideTools = ({ names }: { names: string[] }) => (
  <>
    <ColumnGrip />
    {names.map((name, i) => (
      <SideButton key={i} aria-label={name}>
        <Icon>{art[name]}</Icon>
      </SideButton>
    ))}
  </>
);

const Drawing = () => (
  <svg width="100%" height="100%" fill="none" stroke="#000" role="img" aria-label="Perímetro">
    <g transform="translate(-64 -172)" shapeRendering="crispEdges">
      <polygon points={boundary.map((p) => p.join(",")).join(" ")} strokeWidth="1" />
      {boundary.map(([x, y]) => (
        <rect key={`${x}-${y}`} x={x - 1} y={y - 1} width="3" height="2" fill="#000" stroke="none" />
      ))}
      <path d="M725.5 317v52M699 343.500h53" />
      <rect x="715.5" y="333.5" width="20" height="20" />
    </g>
  </svg>
);

export default function App() {
  return (
    <Page>
      <GlobalStyle />
      <MenuTabs>
        {menus.map(([name, w]) => (
          <MenuTab key={name} $w={w} $active={name.startsWith("GeoIncra")}>{name}</MenuTab>
        ))}
      </MenuTabs>

      <Ribbon>
        {groups.map((g) => (
          <Group key={g.title} $w={g.w}>
            <GroupItems $pad={g.pad}>
              {g.items.map((item) => (
                <React.Fragment key={item.label}>
                  <Command>
                    <BigButton $w={item.w}>
                      <Icon size={32}>{bigIcons[item.icon]}</Icon>
                      <BigLabel>{item.label}</BigLabel>
                    </BigButton>
                    {item.menu && (
                      <ArrowButton aria-label={`Opções de ${item.label}`}>
                        <svg width="6" height="6" viewBox="0 0 6 6" aria-hidden="true"><path d="M0 0h6v2L4 6H2L0 2z" /></svg>
                      </ArrowButton>
                    )}
                  </Command>
                  {item.rule && <ItemRule />}
                </React.Fragment>
              ))}
            </GroupItems>
            <GroupTitle>{g.title}</GroupTitle>
          </Group>
        ))}
      </Ribbon>

      <ToolbarRow>
        <Toolbar>
          <Grip />
          <Tools names={["file", "folder", "save"]} />
          <Rule />
          <ChatButton>
            <svg width="22" height="20" viewBox="0 0 22 20" aria-hidden="true">
              <path d="M13 16q6 0 7-6 3 4 0 7l1 3q-6 0-8-4z" fill={O} />
              <path d="M9 0q9 0 9 7.500T9 15H8q-2 3-6 3 2-2 1-5Q0 11 0 7.500 0 0 9 0z" fill={N} />
            </svg>
            CHAT
          </ChatButton>
          <Rule />
          <Tools names={["layersSet", "layers"]} />
          <Rule />
          <Combo w={204} pad={4} label="Camada" value="0">
            <Swatch />
            <svg width="42" height="18" viewBox="0 0 42 18" fill="none" aria-hidden="true">
              <path d="M12 1v16M4 9h16M6.500 3.500l11 11M17.500 3.500l-11 11" stroke={O} strokeWidth="1.500" />
              <circle cx="12" cy="9" r="4" fill={Y} stroke={O} />
              <path d="M27 8V4q0-3 3-3t3 3v4" stroke={N} strokeWidth="1.600" />
              <path d="M24.500 8h10v8h-10z" fill={Y} stroke={N} strokeWidth="1.600" />
              <path d="M29.500 10v4" stroke={N} strokeWidth="2" />
            </svg>
          </Combo>
          <Rule />
          <Combo w={144} pad={4} label="Cor" value="DaCamada"><Swatch /></Combo>
          <Rule />
          <Combo w={218} pad={7} label="Tipo de linha" value="DaCamada"><Stroke $w={59} $gap={8} /></Combo>
          <Rule />
          <Combo w={148} pad={7} label="Espessura" value="0.00 mm"><Stroke $w={34} $gap={8} /></Combo>
          <Rule />
          <Combo w={70} pad={3} label="Escala" value="1000" />
          <Rule />
          <Tools names={["undo", "redo"]} />
          <Rule />
          <Tools names={["hand"]} />
          <Rule />
          <Tools names={["zoomPage", "zoomPan", "zoomIn", "zoomOut", "zoomLayers"]} />
          <Rule />
          <Tools names={["tableSearch"]} />
          <Rule />
          <Tools names={["full"]} />
          <Rule />
          <Tools names={["minimize", "restore", "close"]} />
        </Toolbar>
      </ToolbarRow>

      <Workspace>
        <Rail>
          <ToolColumn $w={26} $end><SideTools names={drawTools} /></ToolColumn>
          <ToolColumn $w={32}><SideTools names={editTools} /></ToolColumn>
        </Rail>
        <Document>
          <Canvas><Drawing /></Canvas>
          <SheetTabs>
            <SheetTab $w={68} $active>C A D</SheetTab>
            <SheetTab $w={75}>RASTER</SheetTab>
          </SheetTabs>
        </Document>
        <RightRail>
          <ToolColumn $w={31} $leftLine><SideTools names={snapTools} /></ToolColumn>
        </RightRail>
      </Workspace>

      <StatusBar>
        <Coordinates>236111.686 , 7579827.274</Coordinates>
        {toggles.map(([name, w]) => (
          <StatusToggle key={name} $w={w}>{name}</StatusToggle>
        ))}
      </StatusBar>

      <CommandPane>
        <Log>
          <LogLine>Comando: Ambiente CAD acionado</LogLine>
          <LogLine>Comando: &lt;Exibição dos atributos dos pontos desligado&gt;</LogLine>
          <Prompt>
            <label htmlFor="prompt">Comando:</label>
            <input id="prompt" type="text" />
          </Prompt>
        </Log>
        <ScrollBar>
          <svg width="15" height="8" viewBox="0 0 15 8" aria-hidden="true"><path d="M5 8l3-3 3 3z" fill="#6b6b64" /></svg>
          <ScrollThumb />
          <svg width="15" height="14" viewBox="0 0 15 14" aria-hidden="true"><path d="M3 0h11v1H3zM5 7h7l-3.500 4z" fill="#6b6b64" /></svg>
        </ScrollBar>
      </CommandPane>
    </Page>
  );
}
